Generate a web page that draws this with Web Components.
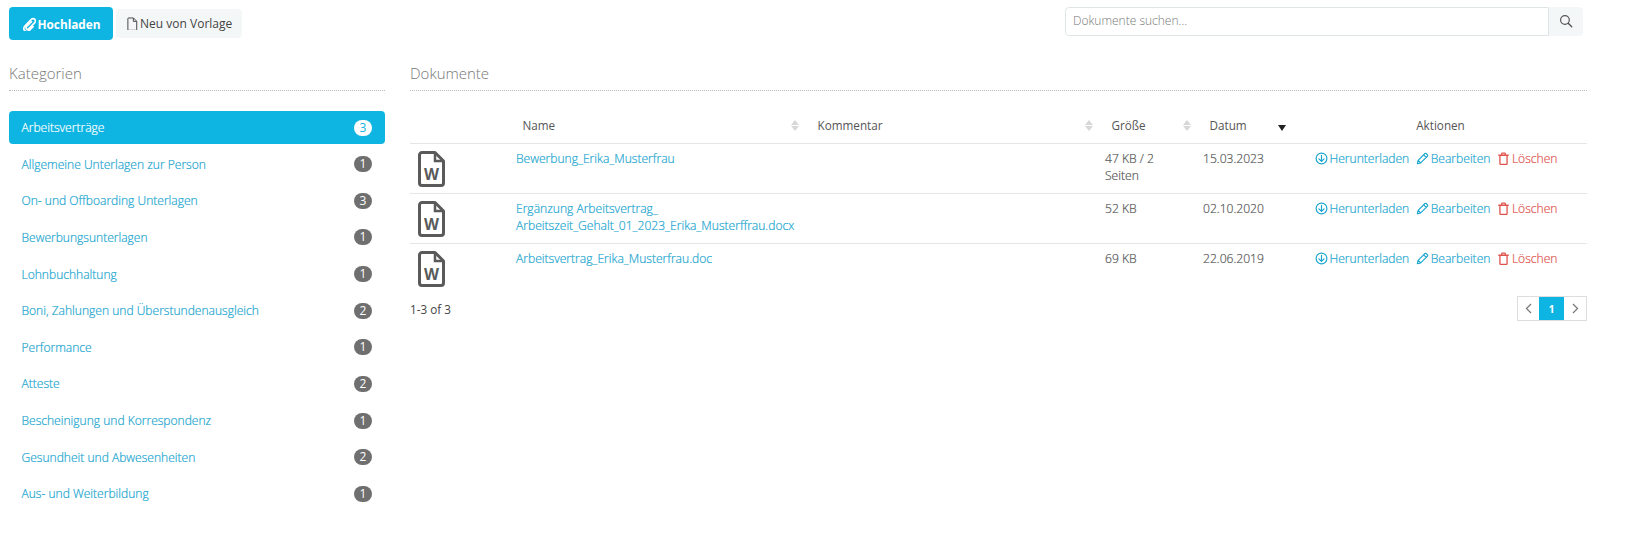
<!DOCTYPE html>
<html lang="de">
<head>
<meta charset="utf-8">
<title>Dokumente</title>
<style>
  html, body { margin: 0; padding: 0; background: #fff; }
  body { font-family: "Open Sans", "Liberation Sans", sans-serif; font-size: 12px; color: #555; }
</style>
</head>
<body>
<doc-page></doc-page>

<script>
const ICONS = {
  clip: '<path fill="none" stroke="currentColor" stroke-width="2.400" stroke-linecap="round" d="M13.500 6.500 6.600 13.400c-1.200 1.200-1.200 2.600-.3 3.500s2.400.9 3.500-.3l7.800-7.800c1.900-1.900 2-4.100.6-5.500s-3.600-1.300-5.500.6L4.400 12.500c-2.300 2.300-2.400 5.300-.6 7s4.700 1.600 7-.7l5-5"/>',
  file: '<path fill="none" stroke="currentColor" stroke-width="1.500" stroke-linejoin="round" d="M3.700 1.500h7.800l5 5v13.200a.8.8 0 0 1-.8.8H3.700a.8.8 0 0 1-.8-.8V2.300a.8.8 0 0 1 .8-.8zM11.300 1.700v5h5"/>',
  search: '<circle cx="8.500" cy="8.500" r="6.200" fill="none" stroke="currentColor" stroke-width="1.700"/><path stroke="currentColor" stroke-width="2" stroke-linecap="round" d="m13.200 13.200 5 5"/>',
  down: '<circle cx="10" cy="10" r="8.300" fill="none" stroke="currentColor" stroke-width="1.800"/><path fill="none" stroke="currentColor" stroke-width="1.800" stroke-linecap="round" stroke-linejoin="round" d="M10 5.200v9M6 10.500l4 4 4-4"/>',
  pencil: '<path fill="none" stroke="currentColor" stroke-width="1.700" stroke-linejoin="round" d="M2 18l1.300-5.200L13.800 2.300a1.300 1.300 0 0 1 1.800 0l2.100 2.100a1.300 1.300 0 0 1 0 1.800L7.200 16.700zM3.300 12.800l3.900 3.900M11.800 4.300l3.900 3.900"/>',
  trash: '<path fill="none" stroke="currentColor" stroke-width="2" stroke-linejoin="round" d="M2 5h16M4.500 5v12.500c0 1 .6 1.700 1.500 1.700h8c.9 0 1.500-.7 1.500-1.700V5M7.200 5V2.800c0-.6.4-1 1-1h3.600c.6 0 1 .4 1 1V5"/>'
};

class UiIcon extends HTMLElement {
  constructor() {
    super();
    this.shadowDOM = this.attachShadow({mode: 'open'});
  }
  connectedCallback() {
    const size = this.getAttribute('size') || 13;
    this.shadowDOM.innerHTML = `
      <style>
        :host { display: inline-flex; flex: none; }
        svg { display: block; }
      </style>
      <svg width="${size}" height="${size}" viewBox="0 0 20 20">${ICONS[this.getAttribute('name')]}</svg>
    `;
  }
}

class UiButton extends HTMLElement {
  constructor() {
    super();
    this.shadowDOM = this.attachShadow({mode: 'open'});
    this.shadowDOM.innerHTML = `
      <style>
        :host {
          display: inline-flex;
          align-items: center;
          gap: 1px;
          height: 29px;
          padding: 0 10px;
          border-radius: 4px;
          background: #f4f7f8;
          color: #444;
          font-size: 12px;
          white-space: nowrap;
        }
        :host([primary]) {
          height: 33px;
          padding: 0 12.500px 0 13px;
          background: #0fb5e2;
          color: #fff;
          font-weight: 700;
          font-size: 11.800px;
          gap: 1.500px;
        }
      </style>
      <slot></slot>
    `;
  }
}

class SearchBox extends HTMLElement {
  constructor() {
    super();
    this.shadowDOM = this.attachShadow({mode: 'open'});
    this.shadowDOM.innerHTML = `
      <style>
        :host { display: flex; width: 518px; height: 29px; }
        .field {
          flex: 1;
          box-sizing: border-box;
          padding: 0 7px;
          line-height: 26px;
          border: 1px solid #e0e6e8;
          border-radius: 4px 0 0 4px;
          color: #777;
          font-size: 12px;
          font-weight: 300;
        }
        .addon {
          width: 34px;
          display: flex;
          align-items: center;
          justify-content: center;
          background: #f4f7f8;
          border-radius: 0 4px 4px 0;
          color: #555;
        }
      </style>
      <div class="field">Dokumente suchen...</div>
      <div class="addon"><ui-icon name="search" size="14"></ui-icon></div>
    `;
  }
}

class SectionTitle extends HTMLElement {
  constructor() {
    super();
    this.shadowDOM = this.attachShadow({mode: 'open'});
    this.shadowDOM.innerHTML = `
      <style>
        :host {
          display: block;
          height: 27px;
          line-height: 21px;
          border-bottom: 1px dotted #bbb;
          color: #777;
          font-size: 15px;
          font-weight: 300;
        }
      </style>
      <slot></slot>
    `;
  }
}

class CategoryItem extends HTMLElement {
  constructor() {
    super();
    this.shadowDOM = this.attachShadow({mode: 'open'});
    this.shadowDOM.innerHTML = `
      <style>
        :host {
          display: flex;
          align-items: center;
          justify-content: space-between;
          height: 33px;
          margin-bottom: 3.650px;
          padding: 0 13px 0 12.500px;
          border-radius: 4px;
          color: #18a5cf;
          font-size: 12.050px;
          font-weight: 300;
          -webkit-text-stroke: 0.200px currentColor;
        }
        :host([active]) { background: #0fb5e2; color: #fff; }
        .count {
          box-sizing: border-box;
          min-width: 18px;
          height: 16px;
          line-height: 16px;
          border-radius: 8px;
          background: #6f6f6f;
          color: #fff;
          text-align: center;
          font-size: 12px;
          font-weight: 400;
          -webkit-text-stroke: 0;
        }
        :host([active]) .count { background: #fff; color: #0fb5e2; }
      </style>
      <span><slot></slot></span>
      <span class="count">${this.getAttribute('count')}</span>
    `;
  }
}

class SortHead extends HTMLElement {
  constructor() {
    super();
    this.shadowDOM = this.attachShadow({mode: 'open'});
    this.shadowDOM.innerHTML = `
      <style>
        :host {
          display: flex;
          align-items: center;
          justify-content: space-between;
          padding: 0 6px 3px 14.500px;
          color: #555;
          font-size: 11.700px;
          font-weight: 400;
        }
        .arrows { display: flex; flex-direction: column; gap: 1px; margin-right: -2px; }
        .arrows i { display: block; width: 0; height: 0; border: 4px solid transparent; }
        .arrows i:first-child { border-top: 0; border-bottom: 5px solid #d8d8d8; }
        .arrows i:last-child { border-bottom: 0; border-top: 5px solid #d8d8d8; }
        .sorted { width: 0; height: 0; margin: 5px 5px 0 0; border: 4px solid transparent; border-bottom: 0; border-top: 6px solid #222; }
      </style>
      <span><slot></slot></span>
      ${this.hasAttribute('sorted') ? '<span class="sorted"></span>'
        : this.hasAttribute('plain') ? ''
        : '<span class="arrows"><i></i><i></i></span>'}
    `;
  }
}

class ActionLink extends HTMLElement {
  constructor() {
    super();
    this.shadowDOM = this.attachShadow({mode: 'open'});
    this.shadowDOM.innerHTML = `
      <style>
        :host {
          display: inline-flex;
          align-items: center;
          gap: 2px;
          color: #18a5cf;
          white-space: nowrap;
        }
        :host([danger]) { color: #e0534d; }
      </style>
      <ui-icon name="${this.getAttribute('icon')}" size="13"></ui-icon>
      <slot></slot>
    `;
  }
}

class DocRow extends HTMLElement {
  set doc(doc) {
    this._doc = doc;
    this.render();
  }

  render() {
    if (!this.shadowDOM) this.shadowDOM = this.attachShadow({mode: 'open'});
    this.shadowDOM.innerHTML = `
      <style>
        :host {
          display: grid;
          grid-template-columns: 98px 295px 294px 98px 102px 1fr;
          height: 49px;
          border-bottom: 1px solid #e6e6e6;
          line-height: 17px;
          font-size: 12.080px;
          font-weight: 300;
          color: #555;
          -webkit-text-stroke: 0.200px currentColor;
        }
        :host(:last-child) { border-bottom: 0; }
        .cell { padding: 6px 8px 0; }
        .type { padding: 7px 0 0 8px; -webkit-text-stroke: 0; }
        .name { color: #18a5cf; grid-column: span 2; }
        .actions { display: flex; align-items: flex-start; gap: 6.500px; padding: 6px 0 0 18px; margin-left: -0.500px; }
        svg { display: block; }
      </style>
      <div class="type">
        <svg width="27" height="36" viewBox="0 0 27 36">
          <path fill="none" stroke="#5a5a5a" stroke-width="3" stroke-linejoin="round" d="M4 1.500h13l8.500 8.500v22a2.500 2.500 0 0 1-2.500 2.500H4A2.500 2.500 0 0 1 1.500 32V4A2.500 2.500 0 0 1 4 1.500z"/>
          <path fill="none" stroke="#5a5a5a" stroke-width="2.500" d="M17 2v8h8"/>
          <text x="13.500" y="28.500" text-anchor="middle" fill="#5a5a5a" font-family="Open Sans" font-weight="700" font-size="15.500">W</text>
        </svg>
      </div>
      <div class="cell name">${this._doc.name}</div>
      <div class="cell">${this._doc.size}</div>
      <div class="cell">${this._doc.date}</div>
      <div class="actions">
        <action-link icon="down">Herunterladen</action-link>
        <action-link icon="pencil">Bearbeiten</action-link>
        <action-link icon="trash" danger>Löschen</action-link>
      </div>
    `;
  }
}

class DocTable extends HTMLElement {
  constructor() {
    super();
    this.shadowDOM = this.attachShadow({mode: 'open'});
  }

  connectedCallback() {
    this.shadowDOM.innerHTML = `
      <style>
        :host { display: block; }
        .head {
          display: grid;
          grid-template-columns: 98px 295px 294px 98px 102px 1fr;
          height: 33px;
          border-bottom: 1px solid #e6e6e6;
        }
        .head sort-head:last-child { justify-content: center; padding: 0 3px 3px 0; }
      </style>
      <div class="head">
        <span></span>
        <sort-head>Name</sort-head>
        <sort-head>Kommentar</sort-head>
        <sort-head>Größe</sort-head>
        <sort-head sorted>Datum</sort-head>
        <sort-head plain>Aktionen</sort-head>
      </div>
      <div class="rows"></div>
    `;
    const docs = [
      {name: 'Bewerbung_Erika_Musterfrau', size: '47 KB / 2 Seiten', date: '15.03.2023'},
      {name: 'Ergänzung Arbeitsvertrag_<br>Arbeitszeit_Gehalt_01_2023_Erika_Musterffrau.docx', size: '52 KB', date: '02.10.2020'},
      {name: 'Arbeitsvertrag_Erika_Musterfrau.doc', size: '69 KB', date: '22.06.2019'}
    ];
    const rows = this.shadowDOM.querySelector('.rows');
    docs.forEach(doc => {
      const row = document.createElement('doc-row');
      row.doc = doc;
      rows.appendChild(row);
    });
  }
}

class PagerBar extends HTMLElement {
  constructor() {
    super();
    this.shadowDOM = this.attachShadow({mode: 'open'});
    this.shadowDOM.innerHTML = `
      <style>
        :host { display: flex; align-items: center; justify-content: space-between; margin-top: 3px; font-size: 11.700px; color: #444; }
        .count { padding-top: 1px; }
        .pages { display: flex; height: 25px; box-sizing: border-box; border: 1px solid #ddd; }
        .pages span { width: 21px; display: flex; align-items: center; justify-content: center; color: #777; }
        .pages span:last-child { width: 22px; }
        .pages .on { width: 25px; background: #0fb5e2; color: #fff; font-weight: 700; font-size: 10px; }
        svg { display: block; }
      </style>
      <div class="count">1-3 of 3</div>
      <div class="pages">
        <span><svg width="7" height="11" viewBox="0 0 7 11"><path fill="none" stroke="currentColor" stroke-width="1.200" d="M6 1 1.500 5.500 6 10"/></svg></span>
        <span class="on">1</span>
        <span><svg width="7" height="11" viewBox="0 0 7 11"><path fill="none" stroke="currentColor" stroke-width="1.200" d="m1 1 4.500 4.500L1 10"/></svg></span>
      </div>
    `;
  }
}

class DocPage extends HTMLElement {
  constructor() {
    super();
    this.shadowDOM = this.attachShadow({mode: 'open'});
    const categories = [
      ['Arbeitsverträge', 3], ['Allgemeine Unterlagen zur Person', 1], ['On- und Offboarding Unterlagen', 3],
      ['Bewerbungsunterlagen', 1], ['Lohnbuchhaltung', 1], ['Boni, Zahlungen und Überstundenausgleich', 2],
      ['Performance', 1], ['Atteste', 2], ['Bescheinigung und Korrespondenz', 1],
      ['Gesundheit und Abwesenheiten', 2], ['Aus- und Weiterbildung', 1]
    ];
    this.shadowDOM.innerHTML = `
      <style>
        :host { display: block; padding: 7px 39px 0 9px; height: 551px; overflow: hidden; }
        .toolbar { display: flex; align-items: center; gap: 3px; height: 33px; }
        search-box { margin-left: auto; margin-right: 4px; margin-top: -5px; }
        .columns { display: grid; grid-template-columns: 376px 1fr; gap: 25px; margin-top: 23px; }
        .list { margin-top: 20px; }
        .table { margin-top: 19px; }
      </style>
      <div class="toolbar">
        <ui-button primary><ui-icon name="clip" size="14"></ui-icon>Hochladen</ui-button>
        <ui-button><ui-icon name="file" size="13"></ui-icon>Neu von Vorlage</ui-button>
        <search-box></search-box>
      </div>
      <div class="columns">
        <section>
          <section-title>Kategorien</section-title>
          <div class="list">
            ${categories.map((c, i) => `<category-item count="${c[1]}" ${i === 0 ? 'active' : ''}>${c[0]}</category-item>`).join('')}
          </div>
        </section>
        <section>
          <section-title>Dokumente</section-title>
          <doc-table class="table"></doc-table>
          <pager-bar></pager-bar>
        </section>
      </div>
    `;
  }
}

customElements.define('ui-icon', UiIcon);
customElements.define('ui-button', UiButton);
customElements.define('search-box', SearchBox);
customElements.define('section-title', SectionTitle);
customElements.define('category-item', CategoryItem);
customElements.define('sort-head', SortHead);
customElements.define('action-link', ActionLink);
customElements.define('doc-row', DocRow);
customElements.define('doc-table', DocTable);
customElements.define('pager-bar', PagerBar);
customElements.define('doc-page', DocPage);
</script>
</body>
</html>
